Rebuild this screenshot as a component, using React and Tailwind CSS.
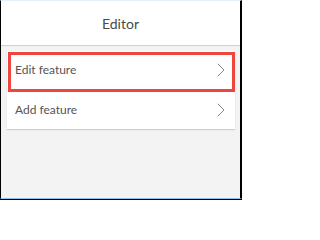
import React from "react";
import { ChevronRight } from "lucide-react";

const items = ["Edit feature", "Add feature"];

const Row = ({ label, last }) => (
  <div className={`flex h-[39px] items-center justify-between pl-[8px] pr-[2px] ${last ? "" : "border-b border-[#e6e6e6]"}`}>
    <span className="text-[12px] text-[#555555]">{label}</span>
    <ChevronRight size={24} strokeWidth={0.9} className="text-[#7a7a7a]" />
  </div>
);

export default function App() {
  return (
    <div className="h-[200px] w-[242px] border-b border-black" style={{ fontFamily: "Lato, 'Noto Sans', sans-serif" }}>
      <div className="flex h-[199px] flex-col border-t border-b border-l border-r-2 border-t-[#e3eef7] border-b-[#8cc4ec] border-l-black border-r-black bg-[#f3f3f3]">
        {/* Header */}
        <div className="flex h-[45px] items-center justify-center border-b border-[#d0d0d0] bg-white">
          <h1 className="pt-[1px] text-[14px] text-[#4a4a4a]">Editor</h1>
        </div>

        {/* Menu card */}
        <div className="pl-[6px] pr-[5px] pt-[5px]">
          <div className="relative bg-white shadow-[0_1px_1px_rgba(0,0,0,0.15)]">
            {items.map((label, i) => (
              <Row key={label} label={label} last={i === items.length - 1} />
            ))}
            {/* highlight annotation */}
            <div className="pointer-events-none absolute left-[1px] right-0 top-[1px] h-[40px] border-[3px] border-[#ee4540]" />
          </div>
        </div>
      </div>
    </div>
  );
}
